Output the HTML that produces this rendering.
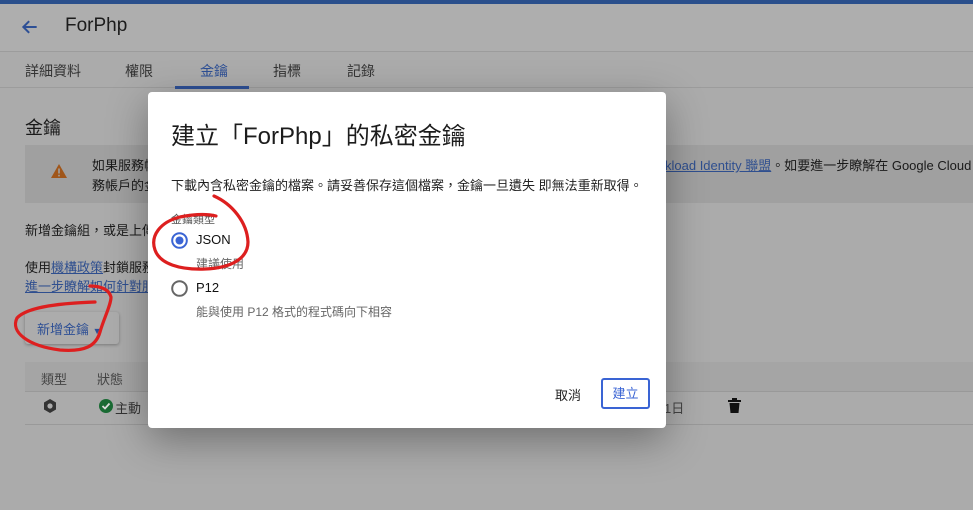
<!DOCTYPE html>
<html><head><meta charset="utf-8"><style>
*{margin:0;padding:0;box-sizing:border-box}
body{width:973px;height:510px;overflow:hidden;background:#ababab;font-family:"Liberation Sans","Noto Sans CJK TC",sans-serif;position:relative;color:#1a1a1a}
.a{position:absolute;white-space:nowrap}
.link{color:#2f4f8f;text-decoration:underline}
</style></head><body>
<div class="a" style="left:0;top:0;width:973px;height:4px;background:#2a4f8c"></div>
<div class="a" style="left:0;top:4px;width:973px;height:48px;background:#aeaeae;border-bottom:1px solid #9c9c9c"></div>
<svg class="a" style="left:20px;top:17px" width="20" height="20" viewBox="0 0 24 24"><path d="M20 12H5M11 5l-7 7 7 7" stroke="#2d4f95" stroke-width="2.4" fill="none"/></svg>
<div class="a" style="left:65px;top:15px;font-size:19px;color:#1c1c1c">ForPhp</div>
<div class="a" style="left:0;top:52px;width:973px;height:36px;border-bottom:1px solid #9c9c9c"></div>
<div class="a" style="left:25px;top:61px;font-size:14px;color:#333">詳細資料</div>
<div class="a" style="left:125px;top:61px;font-size:14px;color:#333">權限</div>
<div class="a" style="left:200px;top:61px;font-size:14px;color:#2d4f95">金鑰</div>
<div class="a" style="left:175px;top:86px;width:74px;height:3px;background:#2d4f95"></div>
<div class="a" style="left:273px;top:61px;font-size:14px;color:#333">指標</div>
<div class="a" style="left:347px;top:61px;font-size:14px;color:#333">記錄</div>
<div class="a" style="left:25px;top:114px;font-size:18px">金鑰</div>
<div class="a" style="left:25px;top:145px;width:948px;height:58px;background:#a0a0a0"></div>
<svg class="a" style="left:51px;top:164px" width="16" height="14" viewBox="0 0 16 14"><path d="M8 0L16 14H0Z" fill="#a0561a"/><rect x="7.2" y="4.5" width="1.6" height="5" fill="#a0a0a0"/><rect x="7.2" y="10.8" width="1.6" height="1.6" fill="#a0a0a0"/></svg>
<div class="a" style="left:92px;top:155px;font-size:13px">如果服務帳</div>
<div class="a" style="left:92px;top:175px;font-size:13px">務帳戶的金</div>
<div class="a" style="left:665px;top:155px;font-size:13px"><span class="link">kload Identity 聯盟</span>。如要進一步瞭解在 Google Cloud</div>
<div class="a" style="left:25px;top:220px;font-size:13px">新增金鑰組，或是上傳</div>
<div class="a" style="left:25px;top:257px;font-size:13px">使用<span class="link">機構政策</span>封鎖服務</div>
<div class="a" style="left:25px;top:276px;font-size:13px"><span class="link">進一步瞭解如何針對服</span></div>
<div class="a" style="left:25px;top:312px;width:94px;height:32px;background:#acacac;box-shadow:0 1px 3px rgba(0,0,0,.3);border-radius:3px"></div>
<div class="a" style="left:37px;top:319px;font-size:13px;color:#2d4f95">新增金鑰 <span style="font-size:9px">▼</span></div>
<div class="a" style="left:25px;top:362px;width:948px;height:30px;background:#a5a5a5;border-bottom:1px solid #999"></div>
<div class="a" style="left:41px;top:369px;font-size:13px;color:#444">類型</div>
<div class="a" style="left:97px;top:369px;font-size:13px;color:#444">狀態</div>
<svg class="a" style="left:42px;top:398px" width="16" height="16" viewBox="0 0 16 16"><path d="M8 1L14 4.5V11.5L8 15L2 11.5V4.5Z" fill="#333"/><circle cx="8" cy="8" r="2.6" fill="#ababab"/></svg>
<svg class="a" style="left:99px;top:399px" width="14" height="14" viewBox="0 0 14 14"><circle cx="7" cy="7" r="7" fill="#1a6b34"/><path d="M3.5 7l2.5 2.5 4.5-5" stroke="#ddd" stroke-width="1.8" fill="none"/></svg>
<div class="a" style="left:115px;top:398px;font-size:13px;color:#333">主動</div>
<div class="a" style="left:25px;top:424px;width:948px;height:1px;background:#999"></div>
<div class="a" style="left:664px;top:398px;font-size:13px;color:#444">1日</div>
<svg class="a" style="left:728px;top:398px" width="13" height="15" viewBox="0 0 13 15"><rect x="0" y="2" width="13" height="2" fill="#111"/><rect x="4" y="0" width="5" height="2" fill="#111"/><path d="M1.5 5h10l-1 10h-8z" fill="#111"/></svg>
<div class="a" style="left:148px;top:92px;width:518px;height:336px;background:#fff;border-radius:4px;box-shadow:0 12px 40px rgba(0,0,0,.35)"></div>
<div class="a" style="left:171px;top:116px;font-size:24px;color:#1c1c1c">建立「ForPhp」的私密金鑰</div>
<div class="a" style="left:171px;top:175px;font-size:13px;color:#222">下載內含私密金鑰的檔案。請妥善保存這個檔案，金鑰一旦遺失 即無法重新取得。</div>
<div class="a" style="left:171px;top:211px;font-size:11px;color:#555">金鑰類型</div>
<svg class="a" style="left:171px;top:232px" width="17" height="17" viewBox="0 0 17 17"><circle cx="8.5" cy="8.5" r="7.3" stroke="#3a64d4" stroke-width="2" fill="none"/><circle cx="8.5" cy="8.5" r="4" fill="#3a64d4"/></svg>
<div class="a" style="left:196px;top:232px;font-size:13px;color:#111">JSON</div>
<div class="a" style="left:196px;top:255px;font-size:12px;color:#666">建議使用</div>
<svg class="a" style="left:171px;top:280px" width="17" height="17" viewBox="0 0 17 17"><circle cx="8.5" cy="8.5" r="7.3" stroke="#666" stroke-width="2" fill="none"/></svg>
<div class="a" style="left:196px;top:280px;font-size:13px;color:#111">P12</div>
<div class="a" style="left:196px;top:303px;font-size:12px;color:#666">能與使用 P12 格式的程式碼向下相容</div>
<div class="a" style="left:555px;top:385px;font-size:13px;color:#222">取消</div>
<div class="a" style="left:601px;top:378px;width:49px;height:31px;border:2px solid #3a64d4;border-radius:3px;color:#3a64d4;font-size:13px;text-align:center;line-height:27px">建立</div>
<svg class="a" style="left:0;top:0" width="973" height="510" viewBox="0 0 973 510"><g stroke="#dd1f1f" stroke-width="3.2" fill="none" stroke-linecap="round">
<path d="M214 196C232 204 247 222 248 242C248 258 232 268 205 269C180 270 160 264 155 250C150 236 160 222 180 217C195 214 208 214 216 216"/>
<path d="M95 302C65 303 28 306 17 318C10 332 28 346 60 350C85 352 96 346 100 332C104 318 111 305 111 297C109 289 100 286 90 286"/>
</g></svg>
</body></html>
